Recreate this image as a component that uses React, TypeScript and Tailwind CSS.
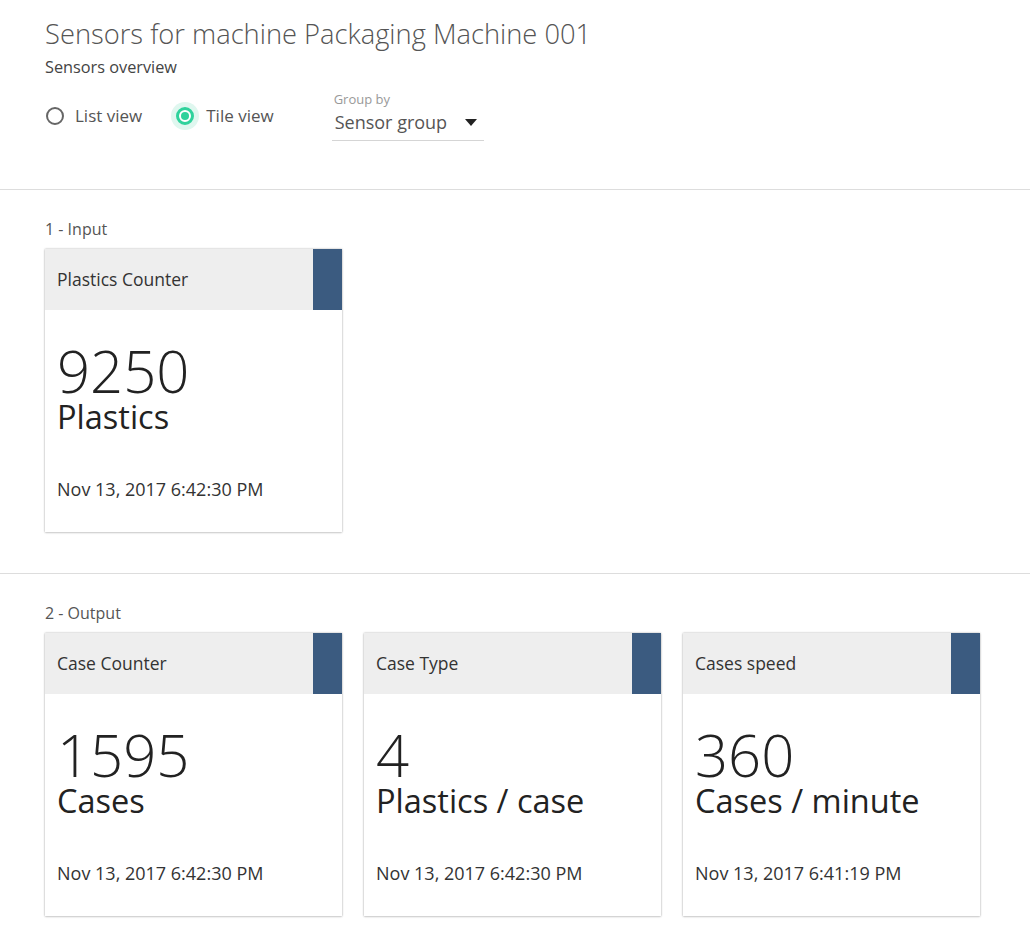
const font = { fontFamily: '"Open Sans", "Noto Sans", sans-serif' };

type Sensor = {
  name: string;
  value: string;
  unit: string;
  time: string;
};

const input: Sensor[] = [
  { name: "Plastics Counter", value: "9250", unit: "Plastics", time: "Nov 13, 2017 6:42:30 PM" },
];

const output: Sensor[] = [
  { name: "Case Counter", value: "1595", unit: "Cases", time: "Nov 13, 2017 6:42:30 PM" },
  { name: "Case Type", value: "4", unit: "Plastics / case", time: "Nov 13, 2017 6:42:30 PM" },
  { name: "Cases speed", value: "360", unit: "Cases / minute", time: "Nov 13, 2017 6:41:19 PM" },
];

function Tile({ sensor }: { sensor: Sensor }) {
  return (
    <div className="w-[297px] h-[283px] flex flex-col bg-white shadow-[0_0_2px_rgba(0,0,0,0.3),0_1px_2px_rgba(0,0,0,0.12)]">
      <div className="h-[61px] flex bg-[#eeeeee]">
        <div className="flex-1 flex items-center pl-3 text-[17.5px] text-[#333]">{sensor.name}</div>
        <div className="w-[29px] bg-[#3b5b80]" />
      </div>
      <div className="flex-1 flex flex-col px-3 pt-[34px] pb-[31px] text-[#222]">
        <div className="text-[58px] leading-[54px] font-light">{sensor.value}</div>
        <div className="mt-[4px] text-[32.5px] leading-[30px]">{sensor.unit}</div>
        <div className="mt-auto text-[18px] leading-[23px] text-[#333]">{sensor.time}</div>
      </div>
    </div>
  );
}

function Section({ label, sensors }: { label: string; sensors: Sensor[] }) {
  return (
    <section className="border-t border-[#dddddd] px-[45px] pt-[28px] pb-[41px]">
      <div className="text-[16px] leading-[22px] text-[#555] mb-[9px]">{label}</div>
      <div className="flex gap-[22px]">
        {sensors.map((s) => (
          <Tile key={s.name} sensor={s} />
        ))}
      </div>
    </section>
  );
}

export default function App() {
  return (
    <div className="min-h-screen bg-white" style={font}>
      <header className="px-[45px] pt-[17px] pb-[48px]">
        <h1 className="text-[27.3px] leading-[34px] font-light text-[#555]">
          Sensors for machine Packaging Machine 001
        </h1>
        <p className="mt-[5px] text-[16.3px] leading-[22px] text-[#444]">Sensors overview</p>

        <div className="mt-[12px] flex items-start">
          <div className="mt-[14px] flex items-center h-[24px] text-[17px] text-[#555]">
            <label className="flex items-center">
              <span className="ml-px w-[18px] h-[18px] rounded-full border-2 border-[#666]" />
              <span className="ml-[11px]">List view</span>
            </label>
            <label className="ml-[34px] flex items-center">
              <span className="relative w-[18px] h-[18px] flex items-center justify-center">
                <span className="absolute -inset-[5px] rounded-full bg-[#dff7ef]" />
                <span className="relative w-[18px] h-[18px] rounded-full border-[3px] border-[#2fd29c] bg-white flex items-center justify-center">
                  <span className="w-[8px] h-[8px] rounded-full bg-[#2fd29c]" />
                </span>
              </span>
              <span className="ml-[12px]">Tile view</span>
            </label>
          </div>

          <div className="ml-[58px] w-[152px] border-b border-[#d5d5d5] pb-[6px]">
            <div className="pl-[2px] text-[13px] leading-[18px] text-[#999]">Group by</div>
            <div className="mt-[2px] pl-[3px] flex items-center text-[18px] leading-[24px] text-[#555]">
              <span>Sensor group</span>
              <svg className="ml-[18px]" width="12" height="7" viewBox="0 0 12 7">
                <path d="M0 0h12L6 7z" fill="#222" />
              </svg>
            </div>
          </div>
        </div>
      </header>

      <Section label="1 - Input" sensors={input} />
      <Section label="2 - Output" sensors={output} />
    </div>
  );
}
